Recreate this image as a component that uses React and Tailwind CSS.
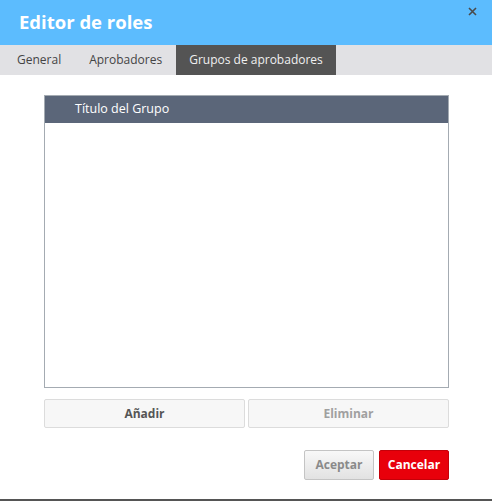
import React from "react";

export default function App() {
  return (
    <div className="relative w-[492px] h-[501px] bg-white overflow-hidden border-b-2 border-[#555555]" style={{ fontFamily: '"Open Sans", sans-serif' }}>
      <div className="h-[45px] bg-[#5cbcfe] flex items-center pl-[19px]">
        <span className="text-white font-bold text-[18.5px] leading-none -mt-[1px]">Editor de roles</span>
      </div>
      <button className="absolute top-[6px] left-[467px] w-[10px] h-[10px] flex items-center justify-center">
        <svg width="9" height="9" viewBox="0 0 9 9">
          <path d="M1 1 L8 8 M8 1 L1 8" stroke="#4a4a4a" strokeWidth="1.6" />
        </svg>
      </button>
      <div className="h-[30px] bg-[#e1e1e4] flex pl-[3px] text-[12px]">
        <div className="px-[14px] flex items-center text-[#444]">General</div>
        <div className="px-[14px] flex items-center text-[#444]">Aprobadores</div>
        <div className="px-[13px] flex items-center bg-[#545454] text-[#f0f0f0]">Grupos de aprobadores</div>
      </div>
      <div className="pl-[44px] pr-[43px] pt-[20px]">
        <div className="h-[293px] border border-[#a4abb2] flex flex-col">
          <div className="h-[27px] bg-[#5b6679] flex items-center pl-[30px] text-white text-[12.5px]">Título del Grupo</div>
        </div>
        <div className="mt-[11px] flex gap-[3px]">
          <button className="flex-1 h-[29px] bg-[#f7f7f7] border border-[#dcdcdc] rounded-[2px] text-[12px] font-bold text-[#555]">Añadir</button>
          <button className="flex-1 h-[29px] bg-[#f7f7f7] border border-[#dcdcdc] rounded-[2px] text-[12px] font-bold text-[#a0a0a0]">Eliminar</button>
        </div>
        <div className="mt-[22px] flex justify-end gap-[5px]">
          <button className="w-[70px] h-[30px] bg-gradient-to-b from-[#f8f8f8] to-[#e2e2e2] border border-[#c4c4c4] rounded-[2px] text-[12px] font-bold text-[#8a8a8a]">Aceptar</button>
          <button className="w-[70px] h-[30px] bg-[#e8000b] border border-[#c50009] rounded-[2px] text-[12px] font-bold text-white">Cancelar</button>
        </div>
      </div>
    </div>
  );
}
